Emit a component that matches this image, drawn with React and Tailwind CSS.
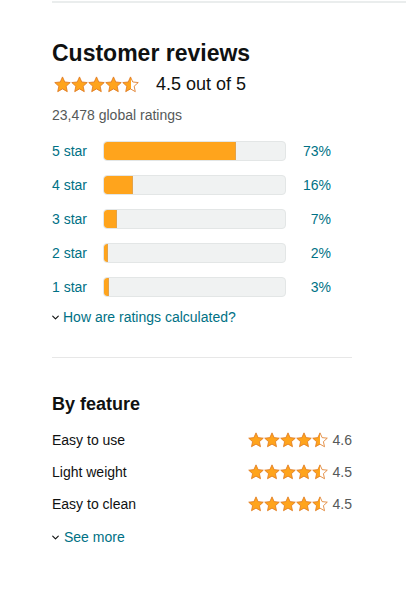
import { useId } from 'react';

const HISTOGRAM = [
  { label: '5 star', pct: 73 },
  { label: '4 star', pct: 16 },
  { label: '3 star', pct: 7 },
  { label: '2 star', pct: 2 },
  { label: '1 star', pct: 3 },
];

const FEATURES = [
  { name: 'Easy to use', rating: '4.6' },
  { name: 'Light weight', rating: '4.5' },
  { name: 'Easy to clean', rating: '4.5' },
];

const STAR = 'M12 1.3L15.18 8.43L22.94 9.25L17.14 14.47L18.76 22.1L12 18.2L5.24 22.1L6.86 14.47L1.06 9.25L8.82 8.43Z';

function Star({ fill = 1, size }) {
  const id = useId();
  return (
    <svg viewBox="0 0 24 24" width={size} height={size} className="shrink-0">
      <defs>
        <linearGradient id={id} x1="0" x2="1" y1="0" y2="0">
          <stop offset={fill} stopColor="#FFA41C" />
          <stop offset={fill} stopColor="#FFFFFF" />
        </linearGradient>
      </defs>
      <path d={STAR} fill={`url(#${id})`} stroke="#DE7921" strokeWidth="1.2" strokeLinejoin="round" />
    </svg>
  );
}

function Stars({ size }) {
  return (
    <div className="flex items-center">
      {[1, 1, 1, 1, 0.5].map((f, i) => (
        <Star key={i} fill={f} size={size} />
      ))}
    </div>
  );
}

function Chevron() {
  return (
    <svg viewBox="0 0 10 6" width="7" height="5" className="shrink-0">
      <path d="M1 1l4 4 4-4" fill="none" stroke="#0F1111" strokeWidth="1.6" strokeLinecap="round" strokeLinejoin="round" />
    </svg>
  );
}

export default function App() {
  return (
    <div className="min-h-screen bg-white text-[#0F1111] font-['Liberation_Sans',Arial,sans-serif]">
      <div className="ml-[52px] h-[2px] bg-[#eaeded] mt-[1px]" />

      <div className="pl-[52px] w-[352px]">
        <section className="pt-[34px]">
          <h2 className="text-[23px] font-bold leading-[32px]">Customer reviews</h2>
          <div className="flex items-center gap-[17px] mt-[3px] h-[24px]">
            <div className="ml-[2px]">
              <Stars size={17} />
            </div>
            <span className="text-[18px] leading-[24px]">4.5 out of 5</span>
          </div>
          <p className="mt-[9px] text-[14px] leading-[20px] text-[#565959]">23,478 global ratings</p>

          <div className="mt-[16px] flex flex-col gap-[14px]">
            {HISTOGRAM.map((row) => (
              <div key={row.label} className="flex items-center h-[20px] text-[14px] text-[#007185]">
                <span className="w-[51px]">{row.label}</span>
                <div className="w-[183px] h-[20px] rounded-[4px] bg-[#F0F2F2] border border-[#E3E6E6] overflow-hidden">
                  <div
                    className="h-full bg-[#FFA41C] border-r border-[#E3A34A] rounded-l-[3px]"
                    style={{ width: `${Math.max(row.pct, 1.5)}%` }}
                  />
                </div>
                <span className="w-[45px] text-right">{row.pct}%</span>
              </div>
            ))}
          </div>

          <div className="mt-[10px] flex items-center gap-[4px] text-[14px] leading-[20px] text-[#007185]">
            <Chevron />
            <span>How are ratings calculated?</span>
          </div>
        </section>

        <div className="mt-[30px] h-[1px] bg-[#e7e7e7]" />

        <section className="pt-[34px]">
          <h3 className="text-[18px] font-bold leading-[24px]">By feature</h3>
          <div className="mt-[14px] flex flex-col gap-[12px]">
            {FEATURES.map((f) => (
              <div key={f.name} className="flex items-center justify-between h-[20px] text-[14px]">
                <span>{f.name}</span>
                <div className="flex items-center gap-[5px]">
                  <Stars size={16} />
                  <span className="text-[#565959]">{f.rating}</span>
                </div>
              </div>
            ))}
          </div>
          <div className="mt-[13px] flex items-center gap-[5px] text-[14px] leading-[20px] text-[#007185]">
            <Chevron />
            <span>See more</span>
          </div>
        </section>
      </div>
    </div>
  );
}
